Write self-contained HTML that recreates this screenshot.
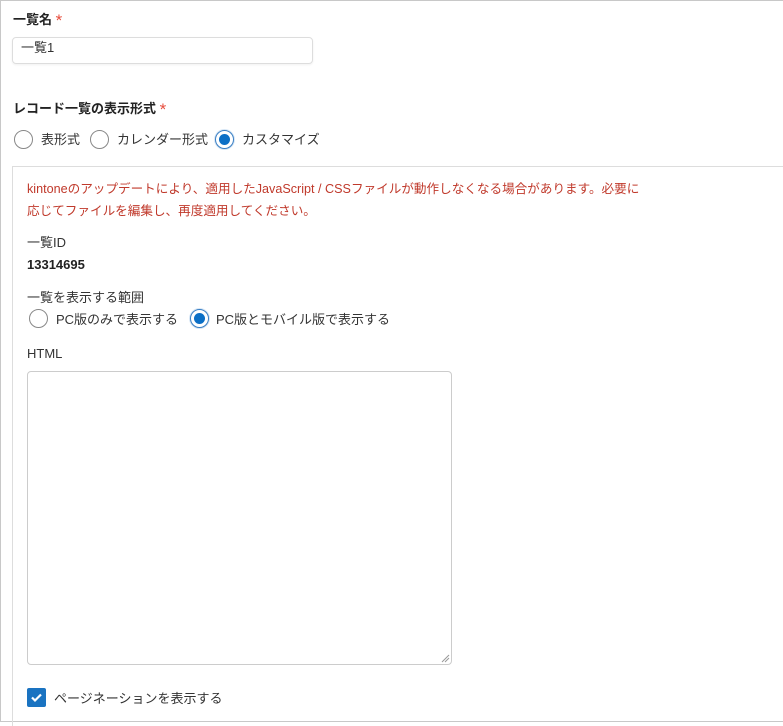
<!DOCTYPE html>
<html><head><meta charset="utf-8"><style>
*{box-sizing:border-box;margin:0;padding:0}
body{width:783px;height:722px;overflow:hidden;background:#fff;font-family:"Liberation Sans","Noto Sans CJK JP",sans-serif;font-size:13px;color:#333;position:relative}
.frame{position:absolute;left:0;top:0;width:783px;height:722px;border:1px solid #c8c8c8;border-right:none}
.a{position:absolute;white-space:nowrap;line-height:18px}
.b{font-weight:bold;color:#222}
.star{color:#e74c3c;font-weight:normal;font-size:17px;line-height:18px;position:relative;top:2px}
.radio{position:absolute;width:19px;height:19px;border:1px solid #888;border-radius:50%;background:#fff}
.radio.on{border-color:#3a7fc4;box-shadow:0 0 0 1px #d6e6f5}
.radio.on::after{content:"";position:absolute;left:3px;top:3px;width:11px;height:11px;border-radius:50%;background:#0b6fc6}
.red{color:#c0392b;font-size:12.6px}
</style></head><body>
<div class="frame"></div>
<div class="a b" style="left:13px;top:10px">一覧名 <span class="star">*</span></div>
<div class="a" style="left:12px;top:37px;width:301px;height:27px;border:1px solid #ddd;border-radius:4px;box-shadow:0 1px 2px rgba(0,0,0,.06)"></div>
<div class="a" style="left:21px;top:39px">一覧1</div>
<div class="a b" style="left:13px;top:99px">レコード一覧の表示形式 <span class="star">*</span></div>
<div class="radio" style="left:14px;top:130px"></div><div class="a" style="left:41px;top:131px">表形式</div>
<div class="radio" style="left:90px;top:130px"></div><div class="a" style="left:117px;top:131px">カレンダー形式</div>
<div class="radio on" style="left:215px;top:130px"></div><div class="a" style="left:242px;top:131px">カスタマイズ</div>
<div class="a" style="left:12px;top:166px;width:771px;height:560px;border-top:1px solid #ddd;border-left:1px solid #ddd"></div>
<div class="a red" style="left:27px;top:178px;line-height:22px">kintoneのアップデートにより、適用したJavaScript / CSSファイルが動作しなくなる場合があります。必要に<br>応じてファイルを編集し、再度適用してください。</div>
<div class="a" style="left:27px;top:234px">一覧ID</div>
<div class="a b" style="left:27px;top:256px">13314695</div>
<div class="a" style="left:27px;top:289px">一覧を表示する範囲</div>
<div class="radio" style="left:29px;top:309px"></div><div class="a" style="left:56px;top:311px">PC版のみで表示する</div>
<div class="radio on" style="left:190px;top:309px"></div><div class="a" style="left:216px;top:311px">PC版とモバイル版で表示する</div>
<div class="a" style="left:27px;top:345px">HTML</div>
<div class="a" style="left:27px;top:371px;width:425px;height:294px;border:1px solid #ccc;border-radius:4px"></div>
<svg class="a" style="left:441px;top:654px" width="9" height="9"><path d="M1 8L8 1M4 8L8 4" stroke="#999" stroke-width="1"/></svg>
<div class="a" style="left:27px;top:688px;width:19px;height:19px;background:#1a73c1;border-radius:2px"><svg width="19" height="19"><path d="M5 9.5L8 12.5L14 6.5" stroke="#fff" stroke-width="2.2" fill="none"/></svg></div>
<div class="a" style="left:54px;top:690px">ページネーションを表示する</div>
</body></html>
